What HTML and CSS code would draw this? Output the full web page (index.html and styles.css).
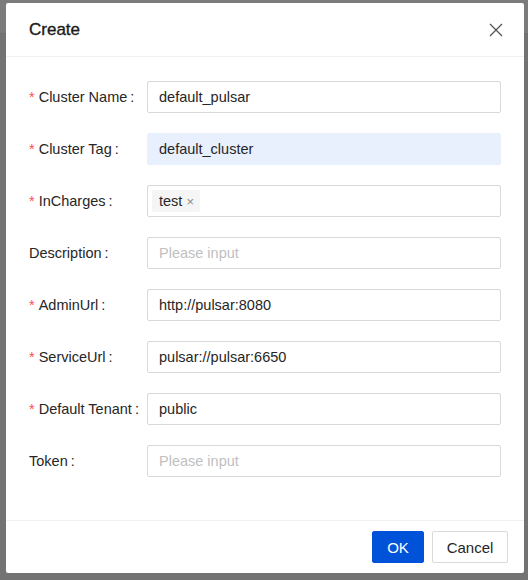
FILE: index.html
```html
<!DOCTYPE html>
<html>
<head>
<meta charset="utf-8">
<link rel="stylesheet" href="styles.css">
</head>
<body>
<div class="backdrop">
  <div class="bg-strip"></div>
  <div class="modal">
    <div class="modal-header">
      <div class="modal-title">Create</div>
      <svg class="close" width="14" height="14" viewBox="0 0 14 14"><path d="M1 1L13 13M13 1L1 13" stroke="#555" stroke-width="1.3" fill="none"/></svg>
    </div>
    <div class="modal-body">
      <div class="row"><label class="label req">Cluster Name</label><div class="input">default_pulsar</div></div>
      <div class="row"><label class="label req">Cluster Tag</label><div class="input autofill">default_cluster</div></div>
      <div class="row"><label class="label req">InCharges</label><div class="input select"><span class="tag">test<span class="tag-x">×</span></span></div></div>
      <div class="row"><label class="label">Description</label><div class="input ph">Please input</div></div>
      <div class="row"><label class="label req">AdminUrl</label><div class="input">http://pulsar:8080</div></div>
      <div class="row"><label class="label req">ServiceUrl</label><div class="input">pulsar://pulsar:6650</div></div>
      <div class="row"><label class="label req">Default Tenant</label><div class="input">public</div></div>
      <div class="row"><label class="label">Token</label><div class="input ph">Please input</div></div>
    </div>
    <div class="modal-footer">
      <button class="btn primary">OK</button>
      <button class="btn cancel">Cancel</button>
    </div>
  </div>
</div>
</body>
</html>
```

FILE: styles.css
```css
html, body {
  margin: 0;
  padding: 0;
}
body {
  width: 528px;
  height: 580px;
  overflow: hidden;
  background: #737373;
  font-family: "Liberation Sans", Arial, sans-serif;
}
.backdrop {
  width: 528px;
  height: 580px;
  display: flex;
  background: linear-gradient(#7b7b7b 0 33px, #6f6f6f 33px 34px, #737373 34px);
}
.bg-strip {
  width: 6px;
  flex: none;
}
.modal {
  margin-top: 3px;
  width: 518px;
  height: 570px;
  background: #fff;
  border-radius: 2px;
  display: flex;
  flex-direction: column;
}
.modal-header {
  height: 53px;
  border-bottom: 1px solid #f0f0f0;
  display: flex;
  align-items: center;
  justify-content: space-between;
  padding: 0 21px 0 23px;
}
.modal-title {
  font-family: "Liberation Sans", sans-serif;
  font-weight: 400;
  font-size: 17px;
  color: #1a1a1a;
  -webkit-text-stroke: 0.35px #1a1a1a;
  padding-top: 1px;
}
.close {
  display: block;
  margin-top: 1px;
}
.modal-body {
  padding: 24px 23px 24px 23px;
  flex: 1;
  display: flex;
  flex-direction: column;
  gap: 20px;
}
.row {
  display: flex;
  align-items: center;
  height: 32px;
}
.label {
  width: 118px;
  flex: none;
  font-size: 14.5px;
  color: #262626;
  white-space: nowrap;
}
.label.req::before {
  content: "*";
  color: #ff4d4f;
  margin-right: 4px;
}
.label::after {
  content: ":";
  margin-left: 3px;
}
.input {
  flex: 1;
  height: 32px;
  box-sizing: border-box;
  border: 1px solid #d9d9d9;
  border-radius: 2px;
  padding: 0 11px;
  display: flex;
  align-items: center;
  font-size: 14.5px;
  color: #262626;
}
.input.autofill {
  background: #e8f0fe;
  border-color: #e8f0fe;
}
.input.ph {
  color: #bfbfbf;
}
.input.select {
  padding: 0 4px;
}
.tag {
  background: #f5f5f5;
  border-radius: 2px;
  height: 22px;
  display: flex;
  align-items: center;
  padding: 0 6px 0 7px;
  color: #262626;
}
.tag-x {
  margin-left: 4px;
  color: #8c8c8c;
  font-size: 13px;
}
.modal-footer {
  height: 52px;
  border-top: 1px solid #f0f0f0;
  display: flex;
  justify-content: flex-end;
  align-items: center;
  gap: 8px;
  padding: 0 16px;
}
.btn {
  height: 32px;
  box-sizing: border-box;
  border: 1px solid #d9d9d9;
  background: #fff;
  border-radius: 2px;
  padding: 0;
  font-family: "Liberation Sans", Arial, sans-serif;
  font-size: 15px;
  color: #262626;
}
.btn.primary {
  width: 52px;
  background: #0052d9;
  border-color: #0052d9;
  color: #fff;
}
.btn.cancel {
  width: 76px;
}
```
